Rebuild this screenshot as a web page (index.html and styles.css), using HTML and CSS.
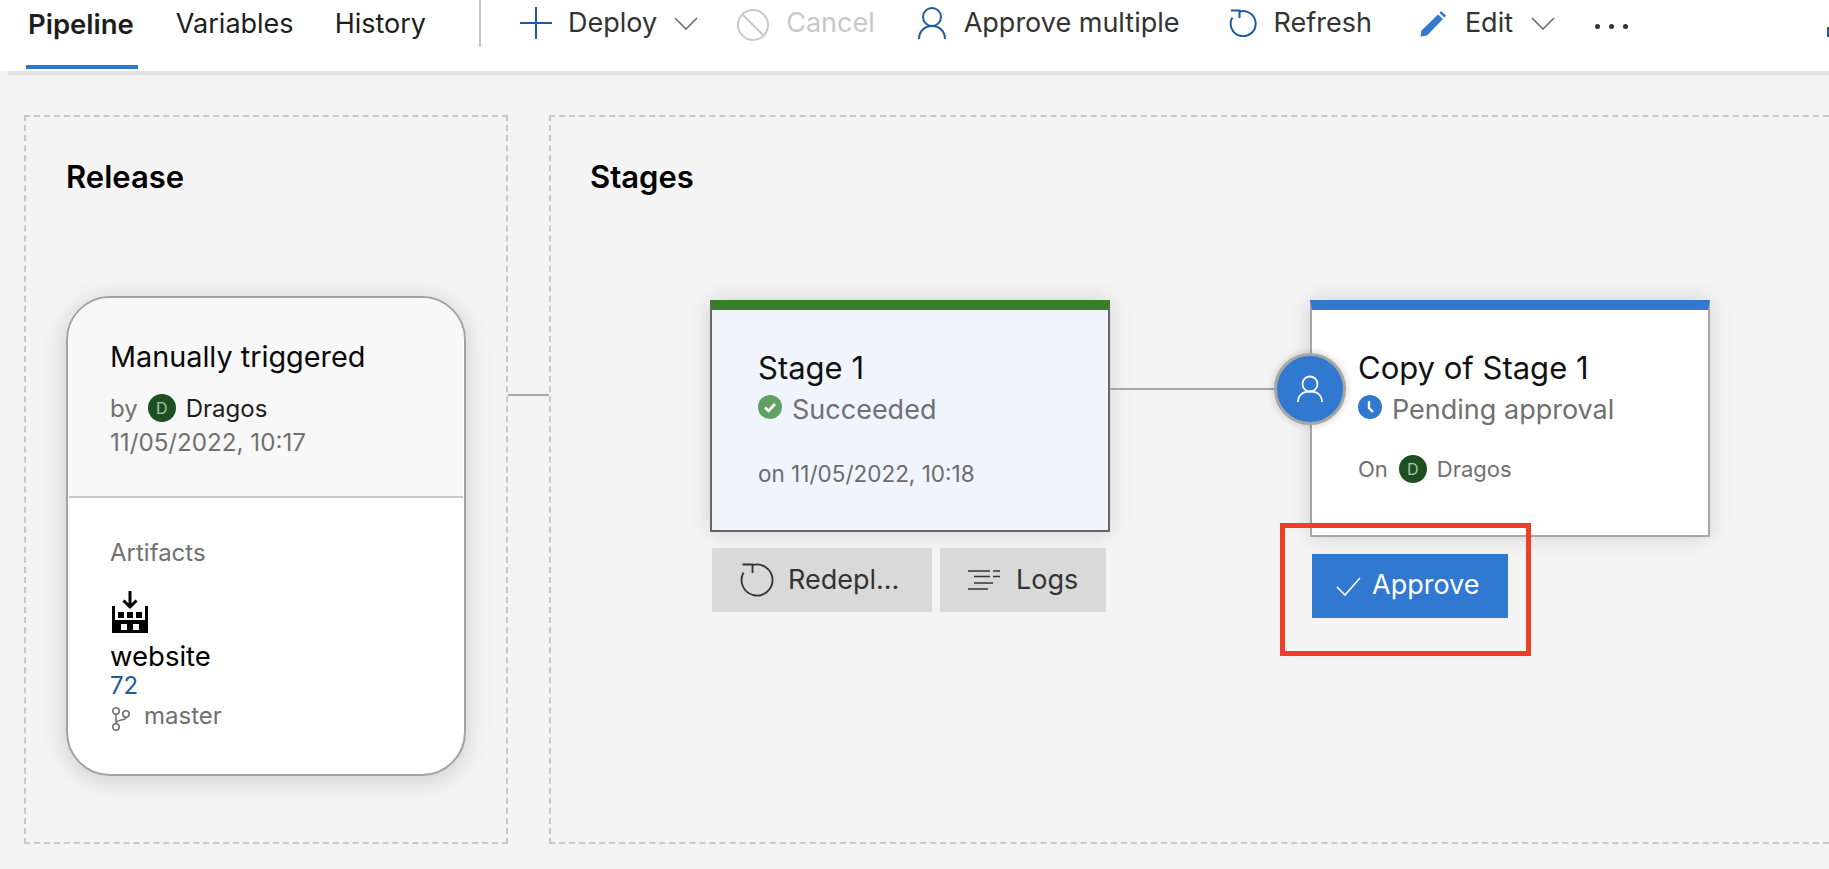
FILE: index.html
```html
<!DOCTYPE html>
<html lang="en">
<head>
<meta charset="utf-8">
<title>Pipeline</title>
<link rel="stylesheet" href="styles.css">
</head>
<body>
<header class="toolbar">
  <nav class="tabs">
    <a class="tab tab-active">Pipeline</a>
    <a class="tab tab-variables">Variables</a>
    <a class="tab tab-history">History</a>
  </nav>
  <div class="divider"></div>
  <div class="actions">
    <svg class="icon icon-plus" viewBox="0 0 32 32"><path d="M16 0V32M0 16H32" class="stroke-blue"/></svg>
    <span class="label label-deploy">Deploy</span>
    <svg class="chevron chevron-deploy" viewBox="0 0 24 13"><path d="M1 1L12 12L23 1"/></svg>
    <svg class="icon icon-cancel" viewBox="0 0 32 32"><circle cx="16" cy="16" r="15"/><path d="M5.500 5.500L26.500 26.500"/></svg>
    <span class="label label-muted">Cancel</span>
    <svg class="icon icon-person" viewBox="0 0 28 32"><circle cx="14" cy="10" r="9" class="stroke-blue"/><path d="M1 32C1 24 7 19 14 19S27 24 27 32" class="stroke-blue"/></svg>
    <span class="label label-approve">Approve multiple</span>
    <svg class="icon icon-refresh" viewBox="0 0 28 28"><path d="M10.500 2.700A12.500 12.500 0 1 1 3.300 8.500" class="stroke-blue"/><path d="M2 1.500H10.500V9" class="stroke-blue"/></svg>
    <span class="label label-refresh">Refresh</span>
    <svg class="icon icon-pencil" viewBox="0 0 28 27"><path d="M22 1L27 5.500L25.500 7.500L20.500 3Z M19 4.500L24 9L8 25.500L1.500 26.500L2.500 20.500Z" fill="#3078d0"/></svg>
    <span class="label label-edit">Edit</span>
    <svg class="chevron chevron-edit" viewBox="0 0 24 13"><path d="M1 1L12 12L23 1"/></svg>
    <div class="more"><i></i><i></i><i></i></div>
  </div>
  <span class="edge-mark"></span>
</header>
<div class="toolbar-rule"></div>

<main class="canvas">
  <section class="panel panel-release">
    <h2 class="panel-title">Release</h2>
    <article class="release-card">
      <div class="release-head">
        <div class="release-title">Manually triggered</div>
        <div class="by-line">
          <span class="muted">by</span>
          <span class="avatar">D</span>
          <span class="by-name">Dragos</span>
        </div>
        <div class="muted date-line">11/05/2022, 10:17</div>
      </div>
      <div class="release-body">
        <div class="muted artifacts">Artifacts</div>
        <svg class="factory" viewBox="0 0 36 42">
          <path d="M18 0V15M11.500 9.500L18 16L24.500 9.500" fill="none" stroke="#000" stroke-width="3"/>
          <path d="M0 15H3V29H33V15H36V42H0Z" fill="#000"/>
          <path d="M6 21H12V27H6ZM15 21H21V27H15ZM24 21H30V27H24Z" fill="#000"/>
          <path d="M9 33H15V39H9ZM21 33H27V39H21Z" fill="#fff"/>
        </svg>
        <div class="artifact-name">website</div>
        <div class="artifact-num">72</div>
        <div class="branch-line">
          <svg class="branch" viewBox="0 0 19 24"><circle cx="5" cy="4" r="3.200"/><circle cx="5" cy="20" r="3.200"/><circle cx="15" cy="7" r="3.200"/><path d="M5 7.200V16.800M15 10.200C15 14 6 12 5 16"/></svg>
          <span class="muted">master</span>
        </div>
      </div>
    </article>
  </section>

  <div class="panel-link"></div>

  <section class="panel panel-stages">
    <h2 class="panel-title">Stages</h2>

    <div class="stage stage-one">
      <article class="stage-card stage-card-done">
        <div class="stage-name">Stage 1</div>
        <div class="stage-status">
          <svg class="status-icon" viewBox="0 0 24 24"><circle cx="12" cy="12" r="12" fill="#639f63"/><path d="M7 12.500L10.500 16L17 9" fill="none" stroke="#fff" stroke-width="2.600"/></svg>
          <span>Succeeded</span>
        </div>
        <div class="stage-when">on 11/05/2022, 10:18</div>
      </article>
      <div class="stage-actions">
        <button class="action-btn btn-redeploy">
          <svg class="btn-icon" viewBox="0 0 34 34"><path d="M12.500 2.200A15.500 15.500 0 1 1 3.500 9.500" fill="none" stroke="#333" stroke-width="1.800"/><path d="M2.500 1.500H12.500V10" fill="none" stroke="#333" stroke-width="1.800"/></svg>
          <span>Redepl...</span>
        </button>
        <button class="action-btn btn-logs">
          <svg class="logs-icon" viewBox="0 0 32 20"><path d="M0 1H22M25 1H32M6 6.500H22M25 6.500H32M6 13H25M0 19H20" fill="none" stroke="#333" stroke-width="1.500"/></svg>
          <span>Logs</span>
        </button>
      </div>
    </div>

    <div class="stage-link"></div>

    <div class="stage stage-two">
      <article class="stage-card stage-card-pending">
        <div class="stage-name">Copy of Stage 1</div>
        <div class="stage-status">
          <svg class="status-icon" viewBox="0 0 24 24"><circle cx="12" cy="12" r="12" fill="#3078d0"/><path d="M11 6V13L15 17" fill="none" stroke="#fff" stroke-width="2.400"/></svg>
          <span>Pending approval</span>
        </div>
        <div class="stage-approver">
          <span class="on-word">On</span>
          <span class="avatar">D</span>
          <span>Dragos</span>
        </div>
      </article>
      <button class="approve-btn">
        <svg class="approve-check" viewBox="0 0 25 19"><path d="M1 10L9 18L24 1" fill="none" stroke="#fff" stroke-width="1.600"/></svg>
        <span>Approve</span>
      </button>
    </div>

    <div class="approver-badge">
      <svg viewBox="0 0 26 28"><circle cx="13" cy="9" r="7.500" fill="none" stroke="#fff" stroke-width="1.800"/><path d="M1 27C1 20 6 16.500 13 16.500S25 20 25 27" fill="none" stroke="#fff" stroke-width="1.800"/></svg>
    </div>
    <div class="callout"></div>
  </section>
</main>
</body>
</html>
```

FILE: styles.css
```css
* { box-sizing: border-box; }
html, body { margin: 0; height: 100%; }
body {
  width: 1829px;
  height: 869px;
  overflow: hidden;
  background: #f4f4f4;
  font-family: Inter, "Noto Sans", "Liberation Sans", sans-serif;
  color: #111;
}

/* toolbar */
.toolbar {
  position: relative;
  display: flex;
  height: 71px;
  background: #fff;
  padding-left: 26px;
}
.tabs { display: flex; gap: 35px; height: 69px; }
.tab {
  height: 69px;
  padding: 6px 3px 0;
  font-size: 27px;
  line-height: 36px;
  color: #1d1d1d;
}
.tab-active {
  padding: 6px 4px 0 2px;
  font-size: 27.500px;
  font-weight: 600;
  border-bottom: 4px solid #3078d0;
}
.divider {
  width: 2px;
  height: 47px;
  margin-left: 50px;
  background: #c8c8c8;
}
.actions { display: flex; align-items: flex-start; height: 47px; }
.label {
  font-size: 27px;
  line-height: 36px;
  margin-top: 5px;
  color: #333;
  white-space: nowrap;
}
.label-muted { color: #c8c8c8; margin-left: 17px; }
.label-deploy { margin-left: 16px; }
.label-approve { margin-left: 18px; }
.label-refresh { margin-left: 17px; }
.label-edit { margin-left: 18px; }
.icon { flex: none; fill: none; stroke-width: 2; }
.stroke-blue { fill: none; stroke: #1f5a9e; stroke-width: 2; }
.icon-plus { width: 32px; height: 32px; margin: 7px 0 0 39px; }
.icon-cancel { width: 32px; height: 32px; margin: 9px 0 0 39px; stroke: #c8c8c8; }
.icon-person { width: 28px; height: 32px; margin: 7px 0 0 43px; }
.icon-refresh { width: 28px; height: 28px; margin: 9px 0 0 49px; }
.icon-pencil { width: 28px; height: 27px; margin: 10px 0 0 47px; }
.chevron { width: 24px; height: 13px; flex: none; margin-top: 17px; fill: none; stroke: #666; stroke-width: 1.500; }
.chevron-deploy { margin-left: 17px; }
.chevron-edit { margin-left: 18px; }
.more { display: flex; gap: 9px; margin: 24px 0 0 40px; }
.more i { width: 5px; height: 5px; border-radius: 50%; background: #333; }
.edge-mark {
  position: absolute;
  right: 0;
  top: 27px;
  width: 2px;
  height: 10px;
  background: #1f5a9e;
}
.toolbar-rule { height: 4px; margin-left: 8px; background: #e2e2e2; }

/* canvas */
.canvas {
  display: flex;
  align-items: flex-start;
  padding: 40px 0 0 24px;
}
.panel {
  flex: none;
  height: 729px;
  border: 2px dashed #c8c8c8;
}
.panel-release { width: 484px; padding-left: 40px; }
.panel-stages {
  position: relative;
  width: 1280px;
  padding-left: 39px;
  border-right: 0;
}
.panel-title {
  margin: 42px 0 0;
  font-size: 31px;
  line-height: 36px;
  font-weight: 600;
  color: #000;
}
.panel-link {
  flex: none;
  width: 41px;
  height: 2px;
  margin-top: 279px;
  background: #a6a6a6;
}

/* release card */
.release-card {
  width: 400px;
  height: 480px;
  margin-top: 101px;
  border: 2px solid #a2a2a2;
  border-radius: 44px;
  background: #fff;
  overflow: hidden;
  box-shadow: 0 4px 24px rgba(0,0,0,.17);
}
.release-head {
  height: 200px;
  padding: 40px 0 0 41px;
  background: #f8f8f8;
  border-bottom: 2px solid #c8c8c8;
  margin: 0 1px;
}
.release-title { font-size: 28.800px; line-height: 38px; color: #0a0a0a; }
.by-line { display: flex; align-items: center; height: 32px; margin-top: 16px; gap: 10px; }
.by-name { color: #1d1d1d; font-size: 24px; }
.muted { color: #707070; font-size: 24px; }
.date-line { font-size: 24.200px; line-height: 38px; }
.avatar {
  flex: none;
  width: 28px;
  height: 28px;
  border-radius: 50%;
  background: #1e4f20;
  color: #a9c4a9;
  font-size: 16px;
  line-height: 28px;
  text-align: center;
}
.release-body { padding: 39px 0 0 42px; }
.artifacts { line-height: 32px; }
.factory { display: block; width: 36px; height: 42px; margin: 22px 0 0 2px; }
.artifact-name { font-size: 27.500px; line-height: 36px; margin-top: 5px; color: #000; }
.artifact-num { font-size: 24px; line-height: 28px; margin-top: -2px; color: #1f5a9e; }
.branch-line { display: flex; align-items: center; gap: 14px; height: 30px; }
.branch { width: 19px; height: 24px; margin: 7px 0 0 1px; fill: none; stroke: #707070; stroke-width: 1.600; }

/* stages */
.stage { position: absolute; top: 183px; }
.stage-one { left: 159px; }
.stage-two { left: 759px; }
.stage-card {
  width: 400px;
  border-style: solid;
  border-width: 10px 2px 2px;
  box-shadow: 0 0 20px rgba(0,0,0,.14);
  padding: 39px 0 0 46px;
}
.stage-card-done {
  height: 232px;
  background: #f0f5fd;
  border-color: #666;
  border-top-color: #3a7d27;
}
.stage-card-pending {
  height: 237px;
  background: #fff;
  border-color: #a6a6a6;
  border-top-color: #3078d0;
}
.stage-name { font-size: 31px; line-height: 38px; color: #111; }
.stage-status {
  display: flex;
  align-items: center;
  gap: 10px;
  height: 34px;
  margin-top: 5px;
  font-size: 27px;
  color: #707070;
}
.status-icon { width: 24px; height: 24px; flex: none; margin-top: -4px; }
.stage-when { margin-top: 34px; font-size: 22.500px; line-height: 28px; color: #6b6b6b; }
.stage-approver {
  display: flex;
  align-items: center;
  gap: 10px;
  height: 28px;
  margin-top: 29px;
  font-size: 22px;
  color: #707070;
}
.on-word { margin-right: 1px; }
.stage-actions { display: flex; gap: 8px; margin: 16px 0 0 2px; }
.action-btn {
  display: flex;
  align-items: center;
  height: 64px;
  border: 0;
  padding: 0 0 0 28px;
  background: #d9d9d9;
  font: inherit;
  font-size: 27px;
  color: #333;
}
.action-btn span { margin-bottom: 2px; }
.btn-redeploy { width: 220px; gap: 14px; }
.btn-logs { width: 166px; gap: 16px; }
.btn-icon { width: 34px; height: 34px; flex: none; }
.logs-icon { width: 32px; height: 20px; flex: none; }
.approve-btn {
  display: flex;
  align-items: center;
  gap: 11px;
  width: 196px;
  height: 64px;
  margin: 17px 0 0 2px;
  padding: 0 0 0 24px;
  border: 0;
  background: #3078d0;
  color: #fff;
  font: inherit;
  font-size: 27px;
}
.approve-btn span { margin-bottom: 4px; }
.approve-check { width: 25px; height: 19px; flex: none; }
.stage-link {
  position: absolute;
  left: 559px;
  top: 271px;
  width: 170px;
  height: 2px;
  background: #a6a6a6;
}
.approver-badge {
  position: absolute;
  left: 723px;
  top: 236px;
  width: 72px;
  height: 72px;
  display: flex;
  align-items: center;
  justify-content: center;
  border: 3px solid #a6a6a6;
  border-radius: 50%;
  background: #3078d0;
  box-shadow: 0 0 8px rgba(0,0,0,.2);
}
.approver-badge svg { width: 26px; height: 28px; }
.callout {
  position: absolute;
  left: 729px;
  top: 406px;
  width: 251px;
  height: 133px;
  border: 5px solid #ee3f24;
}
```
